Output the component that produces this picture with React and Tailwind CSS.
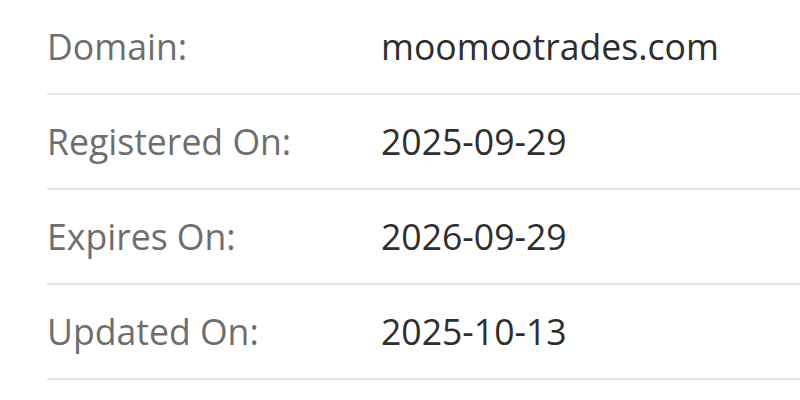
import React from "react";

const rows = [
  { label: "Domain:", value: "moomootrades.com" },
  { label: "Registered On:", value: "2025-09-29" },
  { label: "Expires On:", value: "2026-09-29" },
  { label: "Updated On:", value: "2025-10-13" },
];

const App = () => {
  return (
    <div className="w-[800px] h-[400px] overflow-hidden bg-white pl-[47px] font-['Open_Sans',sans-serif]">
      {rows.map((row) => (
        <div
          key={row.label}
          className="flex items-center h-[95px] border-b-2 border-[#e6e6e6] text-[35.6px] leading-none"
        >
          <div className="w-[334px] shrink-0 text-[#6e6e6e]">{row.label}</div>
          <div className="text-[#2e2e2e]">{row.value}</div>
        </div>
      ))}
    </div>
  );
};

export default App;
